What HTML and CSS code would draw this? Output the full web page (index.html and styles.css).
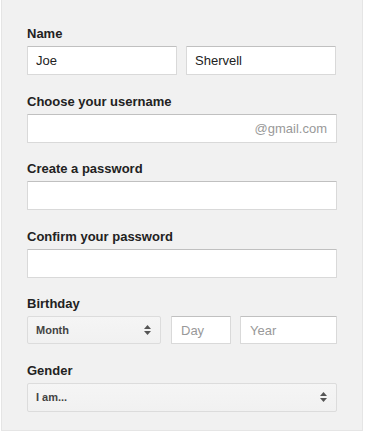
FILE: index.html
```html
<!DOCTYPE html>
<html lang="en">
<head>
    <meta charset="UTF-8">
    <meta name="viewport" content="width=device-width, initial-scale=1.0">
    <title>Create your Google Account</title>
    <link rel="stylesheet" href="styles.css">
</head>
<body>
    <div class="signup-panel">
        <form id="signupForm">
            <div class="form-group">
                <label for="firstName">Name</label>
                <div class="name-row">
                    <input type="text" id="firstName" name="firstName" value="Joe">
                    <input type="text" id="lastName" name="lastName" value="Shervell">
                </div>
            </div>

            <div class="form-group">
                <label for="username">Choose your username</label>
                <div class="input-suffix">
                    <input type="text" id="username" name="username">
                    <span class="suffix">@gmail.com</span>
                </div>
            </div>

            <div class="form-group">
                <label for="password">Create a password</label>
                <input type="password" id="password" name="password">
            </div>

            <div class="form-group">
                <label for="confirm">Confirm your password</label>
                <input type="password" id="confirm" name="confirm">
            </div>

            <div class="form-group">
                <label>Birthday</label>
                <div class="birthday-row">
                    <div class="fake-select month">
                        <span>Month</span>
                        <svg width="7" height="10" viewBox="0 0 7 10"><polygon points="0,4 3.5,0 7,4" /><polygon points="0,6 3.5,10 7,6" /></svg>
                    </div>
                    <input type="text" class="day" placeholder="Day">
                    <input type="text" class="year" placeholder="Year">
                </div>
            </div>

            <div class="form-group">
                <label>Gender</label>
                <div class="fake-select">
                    <span>I am...</span>
                    <svg width="7" height="10" viewBox="0 0 7 10"><polygon points="0,4 3.5,0 7,4" /><polygon points="0,6 3.5,10 7,6" /></svg>
                </div>
            </div>
        </form>
    </div>
</body>
</html>
```

FILE: styles.css
```css
* {
    margin: 0;
    padding: 0;
    box-sizing: border-box;
}

body {
    font-family: "Liberation Sans", Arial, sans-serif;
    background: #fff;
}

.signup-panel {
    margin-left: 1px;
    width: 362px;
    background: #f1f1f1;
    border: 1px solid #e5e5e5;
    border-top: none;
    padding: 26px 25px 18px;
}

.form-group {
    margin-bottom: 18.5px;
}

.form-group:last-child {
    margin-bottom: 0;
}

.form-group label {
    display: block;
    font-size: 13px;
    line-height: 16px;
    font-weight: bold;
    color: #222;
    margin-bottom: 4px;
}

input {
    display: block;
    width: 100%;
    height: 29px;
    padding: 0 8px;
    font-family: inherit;
    font-size: 13px;
    color: #222;
    background: #fff;
    border: 1px solid #d9d9d9;
    border-top-color: #c0c0c0;
    border-radius: 1px;
    outline: none;
}

input::placeholder {
    color: #999;
}

.name-row {
    display: flex;
    gap: 9px;
}

.name-row input {
    width: 150px;
}

.input-suffix {
    display: flex;
    align-items: center;
    height: 29px;
    background: #fff;
    border: 1px solid #d9d9d9;
    border-top-color: #c0c0c0;
    border-radius: 1px;
}

.input-suffix input {
    flex: 1;
    height: 27px;
    border: none;
}

.suffix {
    font-size: 13px;
    color: #999;
    padding-right: 9px;
}

.birthday-row {
    display: flex;
}

.birthday-row .month {
    width: 134px;
    height: 28px;
    margin-right: 10px;
}

.birthday-row .day {
    width: 60px;
    height: 28px;
    margin-right: 9px;
    padding-left: 9px;
}

.birthday-row .year {
    flex: 1;
    height: 28px;
    padding-left: 9px;
}

.fake-select {
    display: flex;
    align-items: center;
    justify-content: space-between;
    height: 29px;
    padding: 0 9px 0 8px;
    font-size: 11px;
    font-weight: bold;
    color: #444;
    background: linear-gradient(#f5f5f5, #f1f1f1);
    border: 1px solid #dcdcdc;
    border-radius: 2px;
}

.fake-select svg {
    fill: #555;
}
```
